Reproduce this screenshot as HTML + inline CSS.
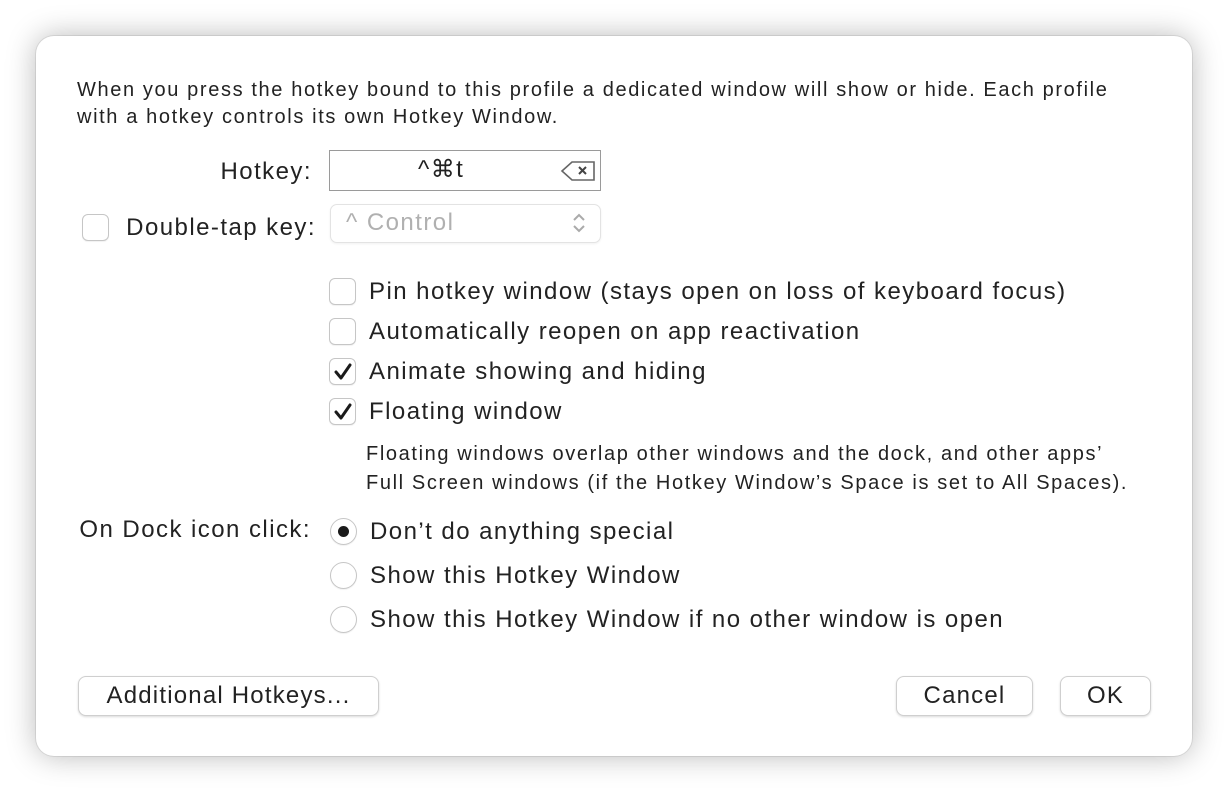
<!DOCTYPE html><html><head><style>
body{margin:0;width:1228px;height:792px;background:#fff;font-family:"Liberation Sans",sans-serif;color:#222;position:relative;overflow:hidden}
.win{position:absolute;left:36px;top:36px;width:1156px;height:720px;background:#fff;border-radius:18px;box-shadow:0 0 30px rgba(0,0,0,.28),0 0 0 1px rgba(0,0,0,.08)}
.t{position:absolute;white-space:nowrap;line-height:1}
.big{font-size:24px;letter-spacing:1.45px}
.sm{font-size:20px;letter-spacing:1.62px}
.r{text-align:right}
.cb{position:absolute;width:25px;height:25px;border:1px solid #c6c6c6;border-radius:6px;background:#fff;box-shadow:0 1px 1px rgba(0,0,0,.06)}
.rd{position:absolute;width:25px;height:25px;border:1px solid #c6c6c6;border-radius:50%;background:#fff;box-shadow:0 1px 1px rgba(0,0,0,.06)}
.btn{position:absolute;height:38px;border:1px solid #cfcfcf;border-radius:8px;background:#fff;box-shadow:0 1px 2px rgba(0,0,0,.15);font-size:24px;letter-spacing:1.2px;text-align:center;line-height:38px}
</style></head><body>
<div class="win"></div>
<div class="t sm" style="left:77px;top:80px">When you press the hotkey bound to this profile a dedicated window will show or hide. Each profile</div>
<div class="t sm" style="left:77px;top:107px">with a hotkey controls its own Hotkey Window.</div>
<div class="t big r" style="right:916px;top:160px">Hotkey:</div>
<div style="position:absolute;left:329px;top:150px;width:270px;height:39px;border:1px solid #9a9a9a;background:#fff"></div>
<div class="t big" style="left:418px;top:158px">^⌘t</div>
<svg style="position:absolute;left:560px;top:159px" width="36" height="24"><path d="M2 12 L12 3 H34 V21 H12 Z" fill="none" stroke="#666" stroke-width="1.6"/><path d="M19 8 L26 15 M26 8 L19 15" stroke="#444" stroke-width="2"/></svg>
<div class="cb" style="left:82px;top:214px"></div>
<div class="t big r" style="right:912px;top:216px">Double-tap key:</div>
<div style="position:absolute;left:330px;top:204px;width:269px;height:37px;border:1px solid #e3e3e3;border-radius:7px;background:#fff;box-shadow:0 1px 2px rgba(0,0,0,.06)"></div>
<div class="t big" style="left:346px;top:211px;color:#b0b0b0">^ Control</div>
<svg style="position:absolute;left:571px;top:211px" width="16" height="24"><path d="M3 9 L8 4 L13 9 M3 15 L8 20 L13 15" fill="none" stroke="#aaa" stroke-width="2"/></svg>
<div class="cb" style="left:329px;top:278px"></div>
<div class="t big" style="left:369px;top:280px">Pin hotkey window (stays open on loss of keyboard focus)</div>
<div class="cb" style="left:329px;top:318px"></div>
<div class="t big" style="left:369px;top:320px">Automatically reopen on app reactivation</div>
<div class="cb" style="left:329px;top:358px"></div>
<svg style="position:absolute;left:332px;top:361px" width="22" height="22"><path d="M4 11 L9 17 L18 4" fill="none" stroke="#1a1a1a" stroke-width="3" stroke-linecap="round" stroke-linejoin="round"/></svg>
<div class="t big" style="left:369px;top:360px">Animate showing and hiding</div>
<div class="cb" style="left:329px;top:398px"></div>
<svg style="position:absolute;left:332px;top:401px" width="22" height="22"><path d="M4 11 L9 17 L18 4" fill="none" stroke="#1a1a1a" stroke-width="3" stroke-linecap="round" stroke-linejoin="round"/></svg>
<div class="t big" style="left:369px;top:400px">Floating window</div>
<div class="t sm" style="left:366px;top:444px">Floating windows overlap other windows and the dock, and other apps’</div>
<div class="t sm" style="left:366px;top:473px">Full Screen windows (if the Hotkey Window’s Space is set to All Spaces).</div>
<div class="t big r" style="right:917px;top:518px">On Dock icon click:</div>
<div class="rd" style="left:330px;top:518px"></div>
<div style="position:absolute;left:338px;top:526px;width:11px;height:11px;border-radius:50%;background:#1a1a1a"></div>
<div class="t big" style="left:370px;top:520px">Don’t do anything special</div>
<div class="rd" style="left:330px;top:562px"></div>
<div class="t big" style="left:370px;top:564px">Show this Hotkey Window</div>
<div class="rd" style="left:330px;top:606px"></div>
<div class="t big" style="left:370px;top:608px">Show this Hotkey Window if no other window is open</div>
<div class="btn" style="left:78px;top:676px;width:299px">Additional Hotkeys...</div>
<div class="btn" style="left:896px;top:676px;width:135px">Cancel</div>
<div class="btn" style="left:1060px;top:676px;width:89px">OK</div>
</body></html>
